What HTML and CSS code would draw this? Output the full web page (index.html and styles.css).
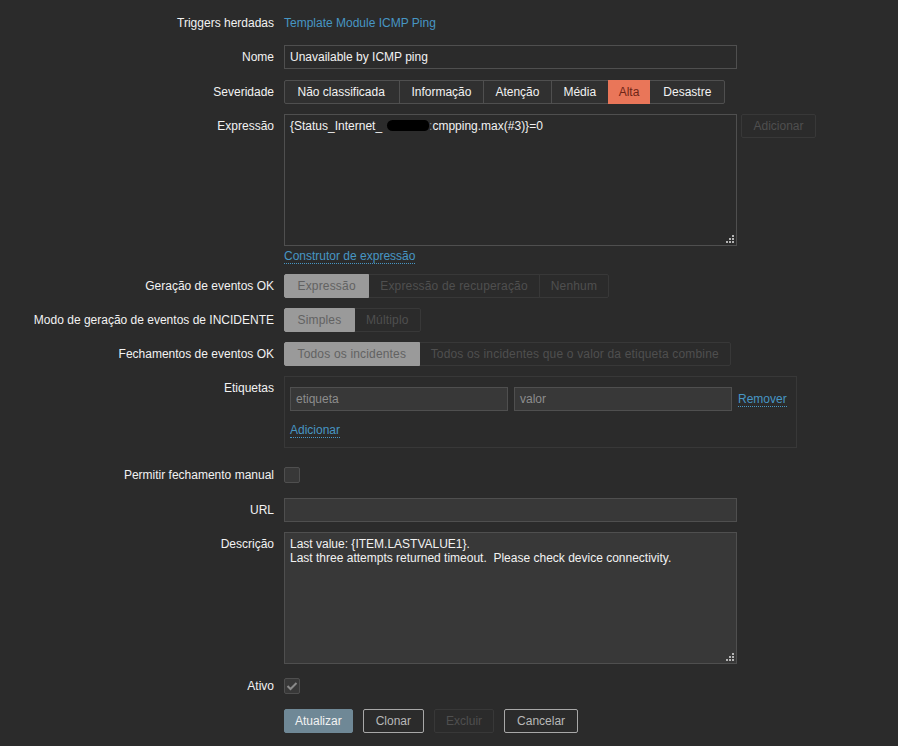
FILE: index.html
```html
<!DOCTYPE html>
<html lang="pt">
<head>
<meta charset="utf-8">
<title>Trigger</title>
<link rel="stylesheet" href="styles.css">
</head>
<body>
<div class="form">
  <div class="row">
    <div class="label">Triggers herdadas</div>
    <div class="field"><a class="link plain">Template Module ICMP Ping</a></div>
  </div>

  <div class="row gap10">
    <div class="label">Nome</div>
    <div class="field"><div class="input ro wide">Unavailable by ICMP ping</div></div>
  </div>

  <div class="row gap11">
    <div class="label">Severidade</div>
    <div class="field">
      <div class="seg sev">
        <span>Não classificada</span><span>Informação</span><span>Atenção</span><span>Média</span><span class="alta">Alta</span><span>Desastre</span>
      </div>
    </div>
  </div>

  <div class="row gap10">
    <div class="label">Expressão</div>
    <div class="field">
      <div class="exprline">
        <div class="textarea ro wide">{Status_Internet_<span class="blot"></span><span class="dim">:</span>cmpping.max(#3)}=0<span class="grip"><svg width="9" height="9" viewBox="0 0 9 9"><g fill="#b4b4b4"><rect x="7" y="1" width="2" height="2"/><rect x="4" y="4" width="2" height="2"/><rect x="7" y="4" width="2" height="2"/><rect x="1" y="7" width="2" height="2"/><rect x="4" y="7" width="2" height="2"/><rect x="7" y="7" width="2" height="2"/></g></svg></span></div>
        <div class="btn disabled addbtn">Adicionar</div>
      </div>
      <div class="builder"><a class="link dotted">Construtor de expressão</a></div>
    </div>
  </div>

  <div class="row gap10">
    <div class="label">Geração de eventos OK</div>
    <div class="field">
      <div class="seg dis"><span class="on">Expressão</span><span>Expressão de recuperação</span><span>Nenhum</span></div>
    </div>
  </div>

  <div class="row gap10">
    <div class="label">Modo de geração de eventos de INCIDENTE</div>
    <div class="field">
      <div class="seg dis"><span class="on">Simples</span><span>Múltiplo</span></div>
    </div>
  </div>

  <div class="row gap10">
    <div class="label">Fechamentos de eventos OK</div>
    <div class="field">
      <div class="seg dis"><span class="on">Todos os incidentes</span><span>Todos os incidentes que o valor da etiqueta combine</span></div>
    </div>
  </div>

  <div class="row gap10">
    <div class="label">Etiquetas</div>
    <div class="field">
      <div class="tags">
        <div class="tagrow">
          <div class="input tag placeholder">etiqueta</div>
          <div class="input tag placeholder">valor</div>
          <a class="link dotted">Remover</a>
        </div>
        <div class="addtag"><a class="link dotted">Adicionar</a></div>
      </div>
    </div>
  </div>

  <div class="row gap15">
    <div class="label">Permitir fechamento manual</div>
    <div class="field center"><span class="check"></span></div>
  </div>

  <div class="row gap11">
    <div class="label">URL</div>
    <div class="field"><div class="input wide"></div></div>
  </div>

  <div class="row gap10">
    <div class="label">Descrição</div>
    <div class="field">
      <div class="textarea wide edit">Last value: {ITEM.LASTVALUE1}.<br>Last three attempts returned timeout.&nbsp; Please check device connectivity.<span class="grip"><svg width="9" height="9" viewBox="0 0 9 9"><g fill="#b4b4b4"><rect x="7" y="1" width="2" height="2"/><rect x="4" y="4" width="2" height="2"/><rect x="7" y="4" width="2" height="2"/><rect x="1" y="7" width="2" height="2"/><rect x="4" y="7" width="2" height="2"/><rect x="7" y="7" width="2" height="2"/></g></svg></span></div>
    </div>
  </div>

  <div class="row gap10">
    <div class="label">Ativo</div>
    <div class="field center"><span class="check checked"><svg width="12" height="10" viewBox="0 0 12 10"><path d="M1.5 5 L4.5 8 L10.5 2" fill="none" stroke="#8a8a8a" stroke-width="2"/></svg></span></div>
  </div>

  <div class="row gap11">
    <div class="label"></div>
    <div class="field buttons">
      <div class="btn main">Atualizar</div>
      <div class="btn alt">Clonar</div>
      <div class="btn disabled">Excluir</div>
      <div class="btn alt">Cancelar</div>
    </div>
  </div>
</div>
</body>
</html>
```

FILE: styles.css
```css
html, body {
  margin: 0;
  padding: 0;
  background: #2b2b2b;
}
body {
  color: #f2f2f2;
  font-family: "Liberation Sans", Arial, sans-serif;
  font-size: 12px;
  width: 898px;
  height: 746px;
  overflow: hidden;
}
.form {
  display: flex;
  flex-direction: column;
  padding-top: 11px;
}
.row {
  display: flex;
  align-items: flex-start;
}
.gap10 { margin-top: 10px; }
.gap11 { margin-top: 11px; }
.gap15 { margin-top: 15px; }
.label {
  flex: 0 0 274px;
  text-align: right;
  line-height: 24px;
  white-space: nowrap;
}
.field {
  margin-left: 10px;
  line-height: 24px;
}
.field.center {
  height: 24px;
  display: flex;
  align-items: center;
}
.link {
  color: #4796c4;
  text-decoration: none;
  cursor: pointer;
}
.link.dotted {
  border-bottom: 1px dotted #4796c4;
  line-height: 14px;
  display: inline-block;
}
.input {
  box-sizing: border-box;
  height: 24px;
  border: 1px solid #4f4f4f;
  background: #383838;
  padding: 0 5px;
  line-height: 22px;
  white-space: nowrap;
}
.input.ro { background: #2b2b2b; }
.wide { width: 453px; }
.placeholder { color: #8d8d8d; }

.seg {
  display: flex;
  box-sizing: border-box;
}
.seg span {
  height: 24px;
  box-sizing: border-box;
  line-height: 22px;
  padding: 0 11px;
  border: 1px solid #4f4f4f;
  margin-left: -1px;
  white-space: nowrap;
}
.seg span:first-child { margin-left: 0; border-radius: 2px 0 0 2px; }
.seg span:last-child { border-radius: 0 2px 2px 0; }
.sev span { background: #303030; color: #f2f2f2; padding: 0 11.5px; }
.sev span:first-child { padding: 0 14px 0 12.5px; }
.sev span:last-child { padding: 0 12.5px 0 13px; }
.sev span.alta {
  background: #e97659;
  border-color: #e97659;
  color: #6e2517;
  padding: 0 10px;
  position: relative;
}
.dis span {
  border-color: #383838;
  color: #4f4f4f;
  background: #2b2b2b;
  letter-spacing: 0.17px;
}
.dis span.on {
  background: #9a9a9a;
  border-color: #9a9a9a;
  color: #626262;
  padding: 0 12.5px;
  position: relative;
}

.exprline {
  display: flex;
  align-items: flex-start;
}
.textarea {
  position: relative;
  box-sizing: border-box;
  height: 132px;
  border: 1px solid #4f4f4f;
  padding: 4px 5px;
  line-height: 14px;
  background: #383838;
}
.textarea.ro { background: #2b2b2b; }
.grip {
  position: absolute;
  right: 2px;
  bottom: 2px;
  width: 9px;
  height: 9px;
  line-height: 0;
}
.blot {
  display: inline-block;
  width: 42px;
  height: 11px;
  margin: 0 0 0 5px;
  background: #000;
  border-radius: 6px 5px 5px 6px;
  vertical-align: -1px;
}
.dim { color: #8a8a8a; }
.builder {
  margin-top: 3px;
  line-height: 14px;
}
.btn {
  box-sizing: border-box;
  height: 24px;
  line-height: 22px;
  padding: 0 11px;
  border: 1px solid transparent;
  border-radius: 2px;
  white-space: nowrap;
}
.btn.disabled {
  border-color: #383838;
  color: #4f4f4f;
}
.addbtn {
  margin-left: 4px;
  width: 75px;
  text-align: center;
  padding: 0;
}
.btn.main {
  background: #6f8896;
  border-color: #6f8896;
  color: #f2f2f2;
  padding: 0 10px;
}
.btn.alt {
  border-color: #a8a8a8;
  color: #b8b8b8;
  padding: 0 12px;
}
.buttons {
  display: flex;
  gap: 10px;
}

.tags {
  box-sizing: border-box;
  width: 513px;
  border: 1px solid #383838;
  padding: 10px 5px 9px;
  line-height: 14px;
}
.tagrow {
  display: flex;
  align-items: center;
  gap: 6px;
}
.input.tag { width: 218px; }
.addtag { margin-top: 12px; }

.check {
  box-sizing: border-box;
  width: 16px;
  height: 16px;
  border: 1px solid #4f4f4f;
  background: #383838;
  border-radius: 2px;
  display: flex;
  align-items: center;
  justify-content: center;
}
```
